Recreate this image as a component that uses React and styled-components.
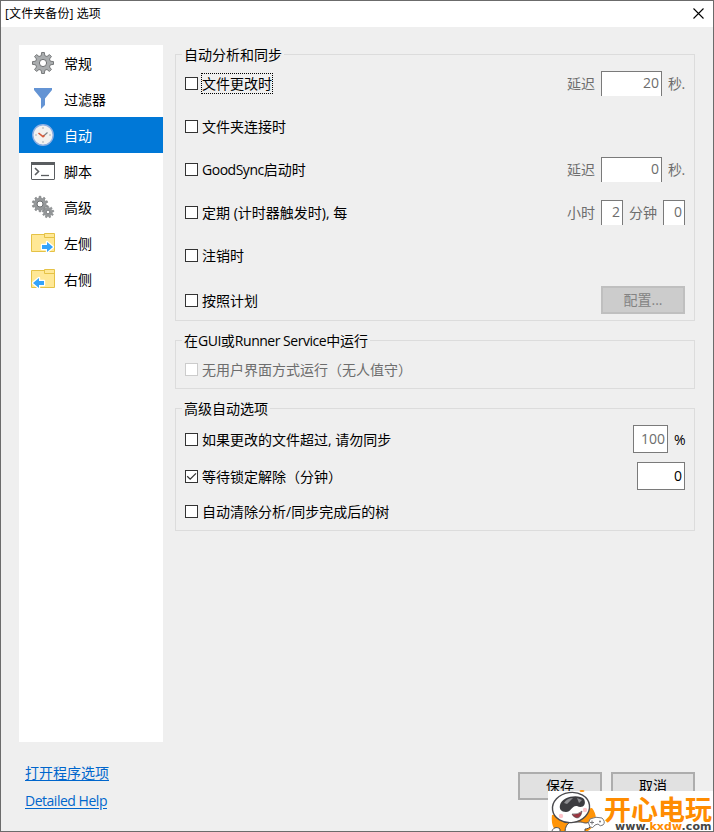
import React from 'react';
import styled, { createGlobalStyle, css } from 'styled-components';

const GlobalStyle = createGlobalStyle`
  *, *::before, *::after {
    box-sizing: border-box;
  }

  body {
    margin: 0;
    font-family: "Open Sans", "Noto Sans CJK SC", sans-serif;
    font-size: 14px;
    line-height: 20px;
    color: #000;
    overflow: hidden;
  }
`;

const Window = styled.div`
  position: relative;
  width: 714px;
  height: 832px;
  display: flex;
  flex-direction: column;
  background-color: #efefef;
  border: 1px solid #6b6b6b;
  white-space: nowrap;
  overflow: hidden;
`;

const TitleBar = styled.div`
  flex: 0 0 26px;
  display: flex;
  justify-content: space-between;
  align-items: center;
  padding: 0 9px 0 4px;
  background-color: #fff;
  font-size: 12px;
  letter-spacing: 0.1px;
`;

const CloseIcon = styled.svg`
  display: block;
  width: 11px;
  height: 11px;
  margin-bottom: 1px;
`;

const Content = styled.div`
  flex: 0 0 715px;
  display: flex;
  align-items: flex-start;
  gap: 12px;
  padding: 18px 18px 0;
`;

const Sidebar = styled.div`
  flex: 0 0 144px;
  height: 697px;
  background-color: #fff;
`;

const SidebarItem = styled.div`
  height: 36px;
  display: flex;
  align-items: center;
  gap: 9px;
  padding-left: 12px;
  color: ${props => (props.$active ? '#fff' : '#000')};
  background-color: ${props => (props.$active ? '#0078d7' : 'transparent')};

  span {
    padding-top: 2px;
  }
`;

const ItemIcon = styled.svg`
  display: block;
  flex: 0 0 24px;
  width: 24px;
  height: 24px;
`;

const Panels = styled.div`
  flex: 0 0 520px;
  display: flex;
  flex-direction: column;
  gap: 19px;
  padding-top: 9px;
`;

const Group = styled.div`
  height: ${props => props.$height}px;
  border: 1px solid #dcdcdc;
  padding: 0 9px;
`;

const Legend = styled.div`
  width: fit-content;
  height: 20px;
  margin: -10px 0 ${props => props.$gap}px -3px;
  padding: 0 2px;
  background-color: #efefef;
`;

const Latin = styled.span`
  letter-spacing: -0.48px;
`;

const Row = styled.div`
  height: ${props => props.$height}px;
  margin-top: ${props => props.$offset || 0}px;
  display: flex;
  justify-content: space-between;
  align-items: center;
`;

const CheckLabel = styled.div`
  display: flex;
  align-items: center;
  gap: 3px;
  color: ${props => (props.$disabled ? '#6d6d6d' : '#000')};
`;

const Box = styled.svg`
  display: block;
  width: 13px;
  height: 13px;
  background-color: #fff;
  border: 1px solid ${props => (props.$disabled ? '#cccccc' : '#333')};
`;

const LabelText = styled.span`
  height: 21px;
  padding-top: 1px;
  border: 1px dotted ${props => (props.$focused ? '#000' : 'transparent')};
  line-height: 18px;
`;

const Fields = styled.div`
  display: flex;
  align-items: center;
  gap: 6px;
  color: #6d6d6d;
`;

const Unit = styled.span`
  width: ${props => props.$width}px;
  color: ${props => (props.$dark ? '#000' : '#6d6d6d')};
  letter-spacing: -0.5px;
`;

const Field = styled.div`
  width: ${props => props.$width}px;
  height: 25px;
  padding-right: 2px;
  background-color: #fff;
  border: 1px solid #7a7a7a;
  border-bottom: none;
  color: ${props => (props.$dark ? '#000' : '#6d6d6d')};
  line-height: 22px;
  text-align: right;

  ${props => props.$full && css`
    height: 28px;
    margin-bottom: 1px;
    border-bottom: 1px solid #7a7a7a;
    line-height: 26px;
  `}
`;

const Button = styled.div`
  width: 84px;
  height: 28px;
  display: flex;
  justify-content: center;
  align-items: center;
  background-color: ${props => (props.$disabled ? '#cccccc' : '#e1e1e1')};
  border: 2px solid ${props => (props.$disabled ? '#bfbfbf' : '#adadad')};
  color: ${props => (props.$disabled ? '#838383' : '#000')};

  ${Row} & {
    margin-bottom: 2px;
  }
`;

const Footer = styled.div`
  display: flex;
  justify-content: space-between;
  align-items: flex-start;
  padding: 20px 18px 0 24px;
`;

const Links = styled.div`
  display: flex;
  flex-direction: column;
  align-items: flex-start;
  gap: 8px;
  padding-top: 1px;
`;

const Link = styled.a`
  color: #0066cc;
  text-decoration: underline;
  text-underline-offset: 2px;
`;

const Actions = styled.div`
  display: flex;
  gap: 9px;
  padding-top: 10px;
`;

const Watermark = styled.div`
  position: absolute;
  right: -1px;
  bottom: -1px;
  width: 166px;
  height: 41px;
  display: flex;
  background-color: #fff;
`;

const Mascot = styled.svg`
  flex: 0 0 56px;
  width: 56px;
  height: 41px;
  overflow: visible;
`;

const Brand = styled.div`
  display: flex;
  flex-direction: column;
  color: #ff8c00;
`;

const BrandName = styled.div`
  height: 30px;
  font-family: "Noto Sans CJK SC", sans-serif;
  font-size: 27px;
  font-weight: 700;
  line-height: 35px;
`;

const BrandUrl = styled.div`
  height: 11px;
  padding-left: 11px;
  font-family: "DejaVu Sans", sans-serif;
  font-size: 11px;
  font-weight: 700;
  line-height: 11px;
  letter-spacing: 0.1px;

  span {
    color: #444;
  }
`;

// closed outline of a cog wheel with square-ish teeth
const cog = (cx, cy, teeth, outer, inner) => {
  const step = (Math.PI * 2) / teeth;
  const points = [];
  for (let i = 0; i < teeth; i += 1) {
    const a = i * step - Math.PI / 2;
    [[-0.3, inner], [-0.17, outer], [0.17, outer], [0.3, inner]].forEach(([t, r]) => {
      const x = cx + r * Math.cos(a + t * step);
      const y = cy + r * Math.sin(a + t * step);
      points.push(`${x.toFixed(2)} ${y.toFixed(2)}`);
    });
  }
  return `M${points.join('L')}Z`;
};

const GearIcon = () => (
  <ItemIcon viewBox="0 0 24 24">
    <path d={cog(12, 12, 8, 10.6, 7.6)} fill="#a9acae" stroke="#6d6f71" strokeWidth="0.9" strokeLinejoin="round" />
    <circle cx="12" cy="12" r="3.6" fill="#fff" stroke="#6d6f71" />
  </ItemIcon>
);

const FilterIcon = () => (
  <ItemIcon viewBox="0 0 24 24">
    <path d="M3 1H21V3L14 11.5V18L10 22V11.5L3 3Z" fill="#6494d4" />
  </ItemIcon>
);

const ClockIcon = () => (
  <ItemIcon viewBox="0 0 24 24">
    <circle cx="12" cy="12" r="10.2" fill="#f3f1ef" stroke="#8fb0e3" strokeWidth="1.4" />
    <path d="M12 4V6M12 18V20M4 12H6M18 12H20" stroke="#c5c8ca" strokeWidth="1.6" />
    <path d="M12 13.5L16.5 9.5" stroke="#7c8085" strokeWidth="1.1" />
    <path d="M7.5 10L12 13.7L13.5 12.3" fill="none" stroke="#d65a3a" strokeWidth="1.6" />
  </ItemIcon>
);

const ScriptIcon = () => (
  <ItemIcon viewBox="0 0 24 24">
    <rect x="0.5" y="3.5" width="23" height="17" rx="0.5" fill="#fff" stroke="#5a5d60" />
    <path d="M0 3H24V6H0Z" fill="#5a5d60" />
    <path d="M4 9L7.5 12.5L4 16" fill="none" stroke="#5a5d60" strokeWidth="1.6" />
    <path d="M10 16.5H18" stroke="#5a5d60" strokeWidth="1.3" />
  </ItemIcon>
);

const GearsIcon = () => (
  <ItemIcon viewBox="0 0 24 24">
    <path d={cog(9, 9, 10, 7.8, 5.8)} fill="#96999b" stroke="#7b7e80" strokeWidth="0.7" />
    <circle cx="9" cy="9" r="3" fill="#fff" stroke="#6d7072" />
    <path d={cog(17, 17, 9, 5.8, 4.2)} fill="#96999b" stroke="#7b7e80" strokeWidth="0.6" />
    <circle cx="17" cy="17" r="1.8" fill="#fff" stroke="#6d7072" strokeWidth="0.8" />
  </ItemIcon>
);

const FolderIcon = ({ left }) => (
  <ItemIcon viewBox="0 0 24 24">
    <path d="M0.5 3.5H13.5V2.5H23.5V20.5H0.5Z" fill="#ffe896" stroke="#e5c246" />
    <path d="M13.5 3V6.5H23.5" fill="none" stroke="#e5c246" />
    <path
      d="M11 14H16V11L22 16L16 21V18H11Z"
      transform={left ? 'translate(24 0) scale(-1 1)' : undefined}
      fill="#34a3fb"
      stroke="#fff"
      strokeWidth="2.4"
      strokeLinejoin="round"
      paintOrder="stroke"
    />
  </ItemIcon>
);

const Checkbox = ({ children, checked, disabled, focused }) => (
  <CheckLabel $disabled={disabled}>
    <Box $disabled={disabled} viewBox="0 0 11 11">
      {checked && <path d="M1.2 5.2L4.2 8.2L10 2.4" fill="none" stroke="#333" strokeWidth="1.3" />}
    </Box>
    <LabelText $focused={focused}>{children}</LabelText>
  </CheckLabel>
);

const items = [
  { name: '常规', icon: <GearIcon /> },
  { name: '过滤器', icon: <FilterIcon /> },
  { name: '自动', icon: <ClockIcon />, active: true },
  { name: '脚本', icon: <ScriptIcon /> },
  { name: '高级', icon: <GearsIcon /> },
  { name: '左侧', icon: <FolderIcon /> },
  { name: '右侧', icon: <FolderIcon left /> },
];

const SiteMark = () => (
  <Watermark>
    <Mascot viewBox="0 0 56 41">
      <ellipse cx="34" cy="0" rx="2.5" ry="1" fill="#ff9408" />
      <path d="M4 24C3 32 5 38 9 41H38C48 36 51 26 44 17Z" fill="#ff9408" />
      <path d="M17 41C17 36 19 33 22 31H33C37 32 39 33 42 30L44 34C42 37 39 38 37 38V41Z" fill="#fff" stroke="#4a4a4e" />
      <path d="M4 41C4 37 9 35 12 38V41Z" fill="#fff" stroke="#4a4a4e" />
      <ellipse cx="23" cy="16.5" rx="18.6" ry="15" fill="#fff" stroke="#4a4a4e" strokeWidth="1.4" transform="rotate(-8 23 16.5)" />
      <path d="M12 14C14 5 31 3 36 8C39 14 34 18 29 15C24 14 23 21 18 21C13 21 11 18 12 14Z" fill="#3c3c40" />
      <path d="M16 12Q19 7 25 7L19 13ZM29 7L34 9L31 12Z" fill="#8c8c90" />
      <circle cx="13" cy="25" r="2.2" fill="#ffc4cb" />
      <circle cx="37" cy="19" r="2.2" fill="#ffc4cb" />
      <path d="M24 23Q30 24 34 20Q33 27 29 27Q25 26 24 23Z" fill="#9c3540" stroke="#4a4a4e" strokeWidth="0.6" />
      <path d="M42 28Q48 25 54 27Q58 31 55 34Q52 36 50 33L47 34Q45 38 42 36Q39 32 42 28Z" fill="#fff" stroke="#77777b" />
      <path d="M42 31.5H46M44 29.5V33.5" stroke="#77777b" />
      <circle cx="52" cy="30.5" r="1" fill="#77777b" />
    </Mascot>
    <Brand>
      <BrandName>开心电玩</BrandName>
      <BrandUrl><span>www.</span>kxdw<span>.com</span></BrandUrl>
    </Brand>
  </Watermark>
);

const App = () => (
  <>
    <GlobalStyle />
    <Window>
      <TitleBar>
        <span>[文件夹备份] 选项</span>
        <CloseIcon viewBox="0 0 11 11">
          <path d="M0.5 0.5L10.5 10.5M10.5 0.5L0.5 10.5" stroke="#000" strokeWidth="1.1" />
        </CloseIcon>
      </TitleBar>
      <Content>
        <Sidebar>
          {items.map(item => (
            <SidebarItem key={item.name} $active={item.active}>
              {item.icon}
              <span>{item.name}</span>
            </SidebarItem>
          ))}
        </Sidebar>
        <Panels>
          <Group $height={267}>
            <Legend $gap={-3}>自动分析和同步</Legend>
            <Row $height={43}>
              <Checkbox focused>文件更改时</Checkbox>
              <Fields>
                <span>延迟</span>
                <Field $width={61}>20</Field>
                <Unit $width={17}>秒.</Unit>
              </Fields>
            </Row>
            <Row $height={43}>
              <Checkbox>文件夹连接时</Checkbox>
            </Row>
            <Row $height={43}>
              <Checkbox><Latin>GoodSync</Latin>启动时</Checkbox>
              <Fields>
                <span>延迟</span>
                <Field $width={61}>0</Field>
                <Unit $width={17}>秒.</Unit>
              </Fields>
            </Row>
            <Row $height={43}>
              <Checkbox>定期 (计时器触发时), 每</Checkbox>
              <Fields>
                <span>小时</span>
                <Field $width={22}>2</Field>
                <span>分钟</span>
                <Field $width={22}>0</Field>
              </Fields>
            </Row>
            <Row $height={43}>
              <Checkbox>注销时</Checkbox>
            </Row>
            <Row $height={37} $offset={5}>
              <Checkbox>按照计划</Checkbox>
              <Button $disabled>配置...</Button>
            </Row>
          </Group>
          <Group $height={49}>
            <Legend $gap={0}>在<Latin>GUI</Latin>或<Latin>Runner Service</Latin>中运行</Legend>
            <Row $height={37}>
              <Checkbox disabled>无用户界面方式运行（无人值守）</Checkbox>
            </Row>
          </Group>
          <Group $height={123}>
            <Legend $gap={3}>高级自动选项</Legend>
            <Row $height={35}>
              <Checkbox>如果更改的文件超过, 请勿同步</Checkbox>
              <Fields>
                <Field $width={35} $full>100</Field>
                <Unit $width={11} $dark>%</Unit>
              </Fields>
            </Row>
            <Row $height={35} $offset={2}>
              <Checkbox checked>等待锁定解除（分钟）</Checkbox>
              <Field $width={48} $full $dark>0</Field>
            </Row>
            <Row $height={35}>
              <Checkbox>自动清除分析/同步完成后的树</Checkbox>
            </Row>
          </Group>
        </Panels>
      </Content>
      <Footer>
        <Links>
          <Link>打开程序选项</Link>
          <Link><Latin>Detailed Help</Latin></Link>
        </Links>
        <Actions>
          <Button>保存</Button>
          <Button>取消</Button>
        </Actions>
      </Footer>
      <SiteMark />
    </Window>
  </>
);

export default App;
